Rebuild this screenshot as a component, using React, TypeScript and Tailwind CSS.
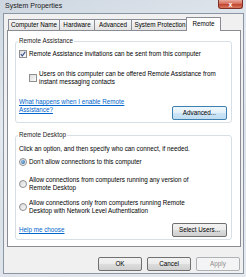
import React from 'react';

type BtnProps = { label: string; size: string; variant?: 'normal' | 'default' | 'disabled' };

const Btn: React.FC<BtnProps> = ({ label, size, variant = 'normal' }) => {
  const look =
    variant === 'disabled'
      ? 'border-[#adb2b5] bg-[#f4f4f4] text-[#8d8d8d]'
      : variant === 'default'
        ? 'border-[#3c7fb1] bg-[linear-gradient(#eef7fc_0%,#e3f0f9_50%,#cde6f6_51%,#bfdcf0_100%)] text-black'
        : 'border-[#707070] bg-[linear-gradient(#f2f2f2_0%,#ebebeb_50%,#dddddd_51%,#cfcfcf_100%)] text-black';
  return (
    <div className={`${size} h-[14px] shrink-0 flex items-center justify-center rounded-[2px] border text-[6.3px] leading-none ${look}`}>
      {label}
    </div>
  );
};

const Check: React.FC<{ checked?: boolean }> = ({ checked }) => (
  <span className="w-[8px] h-[8px] shrink-0 border border-[#8e8f8f] bg-[linear-gradient(135deg,#dcdcdc,#fbfbfb)] flex items-center justify-center">
    {checked && (
      <svg viewBox="0 0 8 8" className="w-[6px] h-[6px]">
        <path d="M1 4.2 L3.1 6.4 L7 1.2" stroke="#3a4f8f" strokeWidth="1.5" fill="none" />
      </svg>
    )}
  </span>
);

const Radio: React.FC<{ on?: boolean }> = ({ on }) => (
  <span className="w-[8px] h-[8px] shrink-0 rounded-full border border-[#8e8f8f] bg-[linear-gradient(135deg,#d8d8d8,#fbfbfb)] flex items-center justify-center">
    {on && <span className="w-[4px] h-[4px] rounded-full bg-[radial-gradient(circle_at_35%_35%,#8fc2ef,#1d5a9a)]" />}
  </span>
);

const tabs = [
  { label: 'Computer Name', w: 'w-[52px]' },
  { label: 'Hardware', w: 'w-[36px]' },
  { label: 'Advanced', w: 'w-[38px]' },
  { label: 'System Protection', w: 'w-[58px]' },
];

const App: React.FC = () => {
  return (
    <div className="w-[246px] h-[277px] flex flex-col overflow-hidden bg-[linear-gradient(160deg,#cdd6e0_0%,#e4e9ef_35%,#dae1e8_60%,#e6eaef_100%)] font-['Liberation_Sans',Arial,sans-serif] text-black">
      {/* Title bar */}
      <div className="h-[13px] shrink-0 flex justify-between">
        <span className="pl-[5px] pt-[1px] text-[7px] leading-[10px] text-[#1b1b1b]">System Properties</span>
        <div className="mr-[3px] w-[25px] h-[9px] rounded-b-[3px] border border-t-0 border-[#7d3027] bg-[linear-gradient(#e9a99c_0%,#d46a57_50%,#c2412d_51%,#d77a5f_100%)] flex items-center justify-center">
          <span className="text-white text-[7px] font-bold leading-none">x</span>
        </div>
      </div>

      {/* Client area */}
      <div className="ml-[3px] mr-[2px] mb-[3px] flex-1 flex flex-col border border-[#8a96a4] bg-[#f0f0f0] pl-[3px] pr-[2px] pt-[3px] pb-[2px]">
        {/* Tabs */}
        <div className="h-[13px] shrink-0 flex items-end pl-[1px] text-[6.3px] leading-none">
          {tabs.map((t, i) => (
            <div
              key={t.label}
              className={`${t.w} ${i > 0 ? '-ml-px' : ''} h-[11px] flex items-center justify-center border border-b-0 border-[#898c95] bg-[linear-gradient(#f7f7f7,#e3e3e3)]`}
            >
              {t.label}
            </div>
          ))}
          <div className="relative z-10 -ml-[3px] -mb-px w-[35px] h-[14px] flex items-center justify-center border border-b-0 border-[#898c95] bg-white pb-[1px]">
            Remote
          </div>
        </div>

        {/* Panel */}
        <div className="shrink-0 border border-[#898c95] bg-white pl-[7px] pr-[8px] pt-[6px] pb-[6px] text-[6.3px] leading-[8px]">
          {/* Remote Assistance */}
          <fieldset className="border border-[#d5dfe5] rounded-[3px] pl-[3px] pr-[4px] pb-[2px]">
            <legend className="-ml-px px-[1px] text-[#222]">Remote Assistance</legend>
            <div className="mt-[5px] flex items-center gap-[2px]">
              <Check checked />
              <span>Remote Assistance invitations can be sent from this computer</span>
            </div>
            <div className="mt-[12px] ml-[10px] flex items-center gap-[2px]">
              <Check />
              <span>
                Users on this computer can be offered Remote Assistance from
                <br />
                instant messaging contacts
              </span>
            </div>
            <div className="mt-[12px] flex items-start justify-between">
              <a className="text-[#0066cc] underline">
                What happens when I enable Remote
                <br />
                Assistance?
              </a>
              <div className="mt-[8px]">
                <Btn label="Advanced..." size="w-[55px]" variant="default" />
              </div>
            </div>
          </fieldset>

          {/* Remote Desktop */}
          <fieldset className="mt-[8px] border border-[#d5dfe5] rounded-[3px] pl-[3px] pr-[4px] pb-[2px]">
            <legend className="-ml-px px-[1px] text-[#222]">Remote Desktop</legend>
            <div className="mt-[6px]">Click an option, and then specify who can connect, if needed.</div>
            <div className="mt-[5px] flex items-center gap-[2px]">
              <Radio on />
              <span>Don't allow connections to this computer</span>
            </div>
            <div className="mt-[10px] flex items-center gap-[2px]">
              <Radio />
              <span>
                Allow connections from computers running any version of
                <br />
                Remote Desktop
              </span>
            </div>
            <div className="mt-[7px] flex items-center gap-[2px]">
              <Radio />
              <span>
                Allow connections only from computers running Remote
                <br />
                Desktop with Network Level Authentication
              </span>
            </div>
            <div className="mt-[8px] flex items-center justify-between">
              <a className="text-[#0066cc] underline">Help me choose</a>
              <Btn label="Select Users..." size="w-[55px]" />
            </div>
          </fieldset>
        </div>

        {/* Dialog buttons */}
        <div className="mt-[10px] flex justify-end gap-[5px] pr-[1px]">
          <Btn label="OK" size="w-[44px]" />
          <Btn label="Cancel" size="w-[44px]" />
          <Btn label="Apply" size="w-[44px]" variant="disabled" />
        </div>
      </div>
    </div>
  );
};

export default App;
